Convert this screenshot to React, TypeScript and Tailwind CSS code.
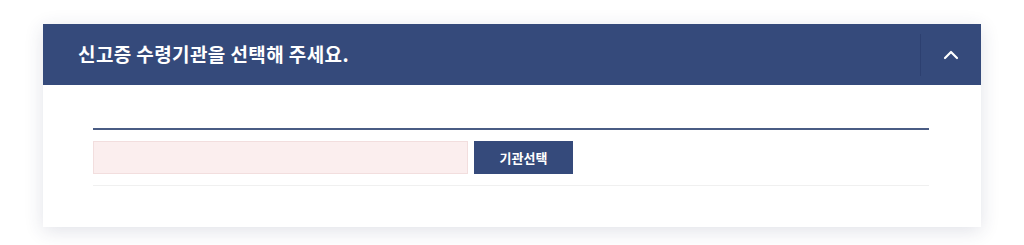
import { ChevronUp } from "lucide-react";

export default function App() {
  return (
    <div className="w-[1024px] h-[245px] bg-white pt-[24px] pl-[43px] font-['Noto_Sans_CJK_KR',sans-serif]">
      <div className="w-[938px] bg-white shadow-[0_4px_18px_rgba(40,50,90,0.14)]">
        {/* Header */}
        <div className="h-[61px] bg-[#354a7b] flex items-center">
          <h2 className="flex-1 pl-[35px] text-[19px] font-bold text-white tracking-[0.4px]">
            신고증 수령기관을 선택해 주세요.
          </h2>
          <div className="w-px h-[42px] bg-[#2d4070]" />
          <button className="w-[60px] h-full flex items-center justify-center text-white">
            <ChevronUp size={24} strokeWidth={2.2} />
          </button>
        </div>

        {/* Body */}
        <div className="pl-[50px] pr-[52px] pt-[43px] pb-[41px]">
          <div className="border-t-2 border-[#4a5c84] pt-[11px] pb-[11px] border-b border-b-[#f0f0f0]">
            <div className="flex gap-[6px]">
              <input
                type="text"
                className="w-[375px] h-[33px] bg-[#fbeeee] border border-[#f2dede] outline-none"
              />
              <button className="w-[99px] h-[33px] bg-[#354a7b] text-white text-[13px] font-bold">
                기관선택
              </button>
            </div>
          </div>
        </div>
      </div>
    </div>
  );
}
